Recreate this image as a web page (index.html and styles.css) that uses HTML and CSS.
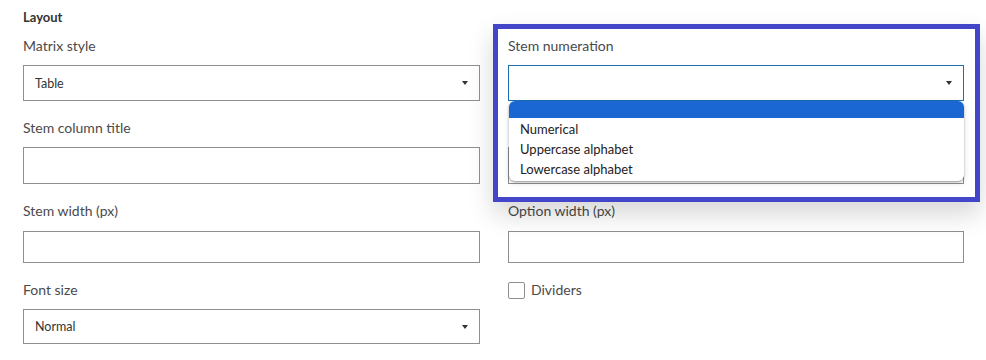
FILE: index.html
```html
<!DOCTYPE html>
<html lang="en">
<head>
<meta charset="utf-8">
<link rel="stylesheet" href="styles.css">
</head>
<body>
<div class="panel">
  <h3 class="heading">Layout</h3>
  <div class="grid">
    <div class="field">
      <label class="label">Matrix style</label>
      <div class="select"><span class="value">Table</span><span class="caret"></span></div>
    </div>
    <div class="field focus-field">
      <label class="label">Stem numeration</label>
      <div class="select focused"><span class="value"></span><span class="caret"></span></div>
      <ul class="dropdown">
        <li class="opt active">&nbsp;</li>
        <li class="opt">Numerical</li>
        <li class="opt">Uppercase alphabet</li>
        <li class="opt">Lowercase alphabet</li>
      </ul>
      <div class="highlight"></div>
    </div>
    <div class="field">
      <label class="label">Stem column title</label>
      <div class="input tall"></div>
    </div>
    <div class="field">
      <label class="label">&nbsp;</label>
      <div class="input tall"></div>
    </div>
    <div class="field">
      <label class="label loose">Stem width (px)</label>
      <div class="input short"></div>
    </div>
    <div class="field">
      <label class="label loose">Option width (px)</label>
      <div class="input short"></div>
    </div>
    <div class="field">
      <label class="label">Font size</label>
      <div class="select compact"><span class="value">Normal</span><span class="caret"></span></div>
    </div>
    <div class="field">
      <label class="check"><span class="box"></span>Dividers</label>
    </div>
  </div>
</div>
</body>
</html>
```

FILE: styles.css
```css
* { box-sizing: border-box; }
html, body { margin: 0; padding: 0; background: #fff; }
body {
  font-family: Lato, "Open Sans", "Liberation Sans", sans-serif;
  color: #444;
  width: 986px;
  height: 360px;
  overflow: hidden;
}
.panel { padding: 8px 22px 0 23px; }
.heading {
  margin: 0;
  font-size: 13px;
  font-weight: 700;
  color: #333;
  line-height: 18px;
}
.grid {
  display: grid;
  grid-template-columns: 457px 456px;
  column-gap: 28px;
  row-gap: 17px;
  margin-top: 10px;
}
.field { position: relative; }
.label {
  display: block;
  font-size: 14px;
  line-height: 20px;
  color: #4a4a4a;
  margin-bottom: 9px;
}
.label.loose { margin-bottom: 10px; }
.select, .input {
  height: 36px;
  border: 1px solid #8f8f8f;
  background: #fff;
  display: flex;
  align-items: center;
  justify-content: space-between;
  padding: 0 11px 0 11px;
}
.input.tall { height: 37px; }
.input.short { height: 32px; }
.select.compact { height: 35px; }
.value { font-size: 12.5px; color: #333; }
.caret {
  width: 0; height: 0;
  border-left: 3.5px solid transparent;
  border-right: 3.5px solid transparent;
  border-top: 4px solid #333;
}
.select.focused { border-color: #1c6fb5; }
.dropdown {
  position: absolute;
  left: 1px; right: 0;
  top: 65px;
  margin: 0;
  padding: 0 0 2px 0;
  list-style: none;
  background: #fff;
  border-radius: 6px;
  box-shadow: 0 1px 2px rgba(0,0,0,0.35), 0 2px 6px rgba(0,0,0,0.12);
  z-index: 3;
  overflow: hidden;
}
.opt {
  font-size: 13px;
  line-height: 20px;
  padding: 0 11px;
  color: #222;
}
.opt.active { background: #1a67d3; height: 17px; line-height: 17px; margin-bottom: 1px; }
.highlight {
  position: absolute;
  left: -15px;
  right: -16px;
  top: -12px;
  height: 178px;
  border: 5px solid #4346c9;
  z-index: 2;
  box-shadow: 0 12px 24px rgba(0,0,0,0.16);
}
.check {
  display: flex;
  align-items: center;
  font-size: 14px;
  color: #4a4a4a;
  line-height: 20px;
}
.box {
  width: 17px; height: 17px;
  border: 1px solid #8f8f8f;
  border-radius: 2px;
  margin-right: 6px;
  background: #fff;
}
```
